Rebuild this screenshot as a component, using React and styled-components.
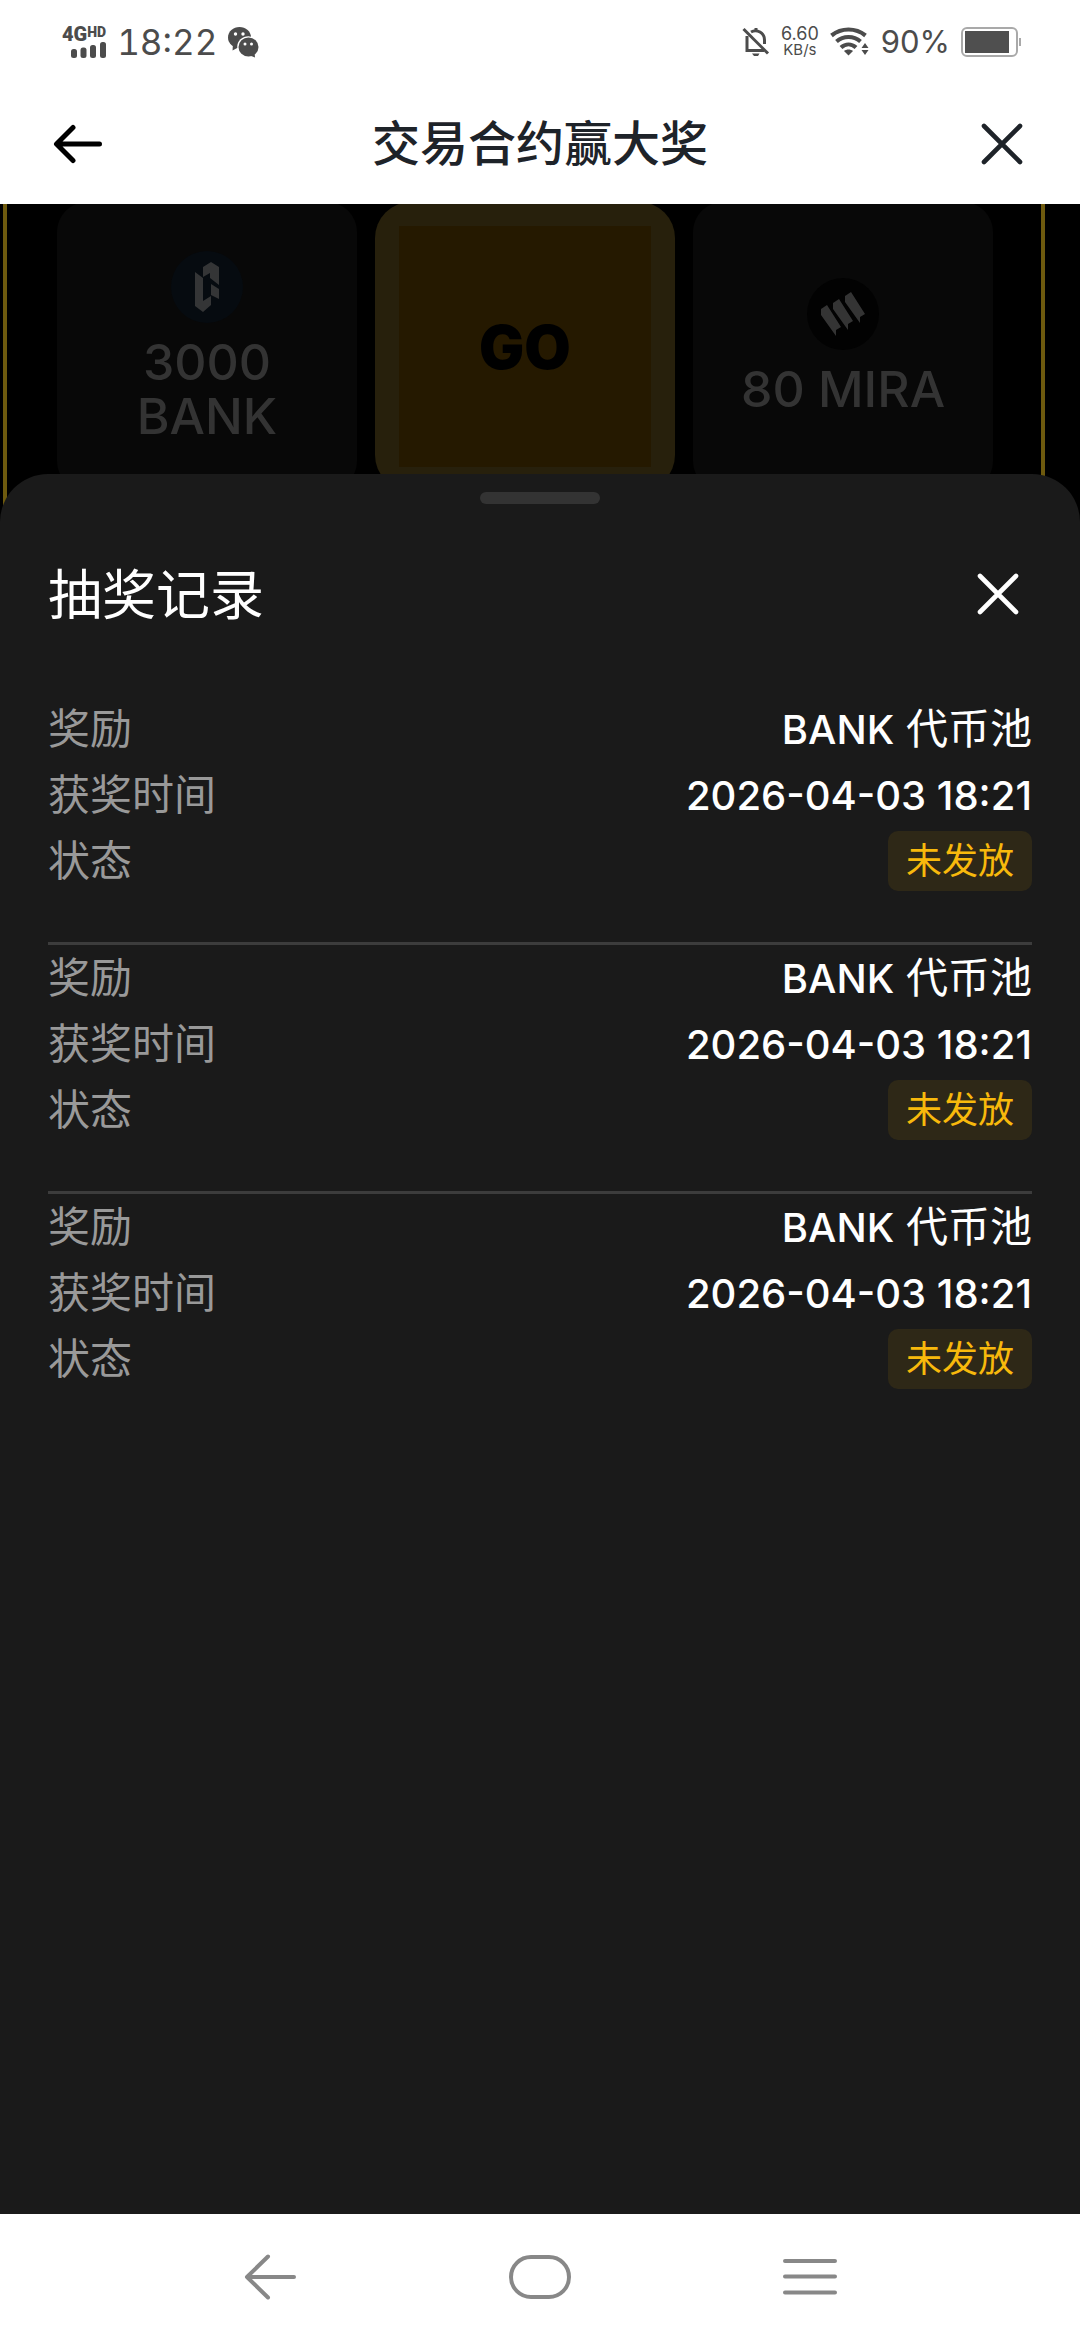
import styled, { createGlobalStyle } from "styled-components";

const records = [
  { id: 1, token: "BANK", pool: "代币池", time: "2026-04-03 18:21", status: "未发放" },
  { id: 2, token: "BANK", pool: "代币池", time: "2026-04-03 18:21", status: "未发放" },
  { id: 3, token: "BANK", pool: "代币池", time: "2026-04-03 18:21", status: "未发放" },
];

const CloseIcon = () => (
  <svg width="44" height="44" viewBox="0 0 44 44" fill="none" stroke="currentColor" strokeWidth="4.6" strokeLinecap="round">
    <path d="M4 4L40 40M40 4L4 40" />
  </svg>
);

const BankLogo = () => (
  <svg width="72" height="72" viewBox="0 0 72 72">
    <circle cx="36" cy="36" r="36" fill="#060b10" />
    <g fill="#343536">
      <path d="M24 21L32 27V50L40 45V54L32 61L24 55Z" />
      <path d="M32 16L40 11L48 16V34L39 27V22L32 26Z" />
      <path d="M40 33L48 38V48L40 44Z" />
    </g>
  </svg>
);

const MiraLogo = () => (
  <svg width="72" height="72" viewBox="0 0 72 72">
    <circle cx="36" cy="36" r="36" fill="#020202" />
    <g fill="#343434">
      <path d="M14 31L20 27L34 49L29 52V58L14 37Z" />
      <path d="M26 25L32 21L46 43L41 46V52L26 31Z" />
      <path d="M38 18L44 14L58 36L53 39V45L38 24Z" />
    </g>
  </svg>
);

const App = () => {
  return (
    <>
      <GlobalStyle />
      <Page>
        <StatusBar>
          <StatusGroup>
            <Network>
              <NetworkType>
                4G<small>HD</small>
              </NetworkType>
              <svg width="35" height="16" viewBox="0 0 35 16" fill="#4c4c4c">
                <rect x="0" y="7" width="6" height="9" rx="2.5" />
                <rect x="9.5" y="5.5" width="6" height="10.5" rx="2.5" />
                <rect x="19" y="3" width="6" height="13" rx="2.5" />
                <rect x="29" y="0" width="6" height="16" rx="2.5" />
              </svg>
            </Network>
            <Clock>18:22</Clock>
            <svg width="31" height="31" viewBox="0 0 31 31">
              <g fill="#4c4c4c">
                <ellipse cx="11.5" cy="10.5" rx="11.5" ry="10.5" />
                <path d="M5 17L4.5 23.5L11 20Z" />
              </g>
              <ellipse cx="20.5" cy="20" rx="11.3" ry="10.8" fill="#fff" />
              <g fill="#4c4c4c">
                <ellipse cx="20.5" cy="20" rx="10" ry="9.5" />
                <path d="M22 28.5L27 30.5L26.5 25.5Z" />
              </g>
              <g fill="#fff">
                <circle cx="7.5" cy="7" r="1.7" />
                <circle cx="15" cy="7" r="1.7" />
                <circle cx="17" cy="17" r="1.5" />
                <circle cx="23.5" cy="17" r="1.5" />
              </g>
            </svg>
          </StatusGroup>
          <StatusGroup>
            <svg width="28" height="30" viewBox="0 0 28 30" fill="none" stroke="#4c4c4c" strokeWidth="3">
              <path d="M5 9V23.5H22" />
              <path d="M9 5C15 1.5 22.5 6 22.5 13V17" />
              <path d="M1.5 2L26 26.5" />
              <path d="M14 1V4" />
              <path d="M10 26.5H17.5L16 29H12Z" fill="#4c4c4c" stroke="none" />
            </svg>
            <Speed>
              <span>6.60</span>
              <small>KB/s</small>
            </Speed>
            <svg width="40" height="30" viewBox="0 0 40 30" fill="none" stroke="#4c4c4c" strokeWidth="4.2">
              <path d="M1.5 8.5C11.5 0.5 25.5 0.5 35.5 8.5" />
              <path d="M6.5 14.5C13.5 8.5 23.5 8.5 30.5 14.5" />
              <path d="M11 20.5C15.5 16.5 21.5 16.5 26 20.5" />
              <path d="M14 24C16.5 22 20.5 22 23 24L18.5 28.5Z" fill="#4c4c4c" stroke="none" />
              <path d="M35 16L38.5 21H31.5ZM35 28L31.5 23H38.5Z" fill="#4c4c4c" stroke="none" />
            </svg>
            <Battery>90%</Battery>
            <svg width="61" height="30" viewBox="0 0 61 30">
              <rect x="1" y="1" width="55" height="28" rx="5" fill="#fff" stroke="#a9a9a9" strokeWidth="2" />
              <rect x="4" y="4" width="44" height="22" fill="#4f4f4f" />
              <rect x="58" y="11" width="2" height="8" fill="#a9a9a9" />
            </svg>
          </StatusGroup>
        </StatusBar>

        <Header>
          <IconButton aria-label="返回" $color="#000">
            <svg width="50" height="42" viewBox="0 0 50 42" fill="none" stroke="currentColor" strokeWidth="5" strokeLinecap="round" strokeLinejoin="round">
              <path d="M46.5 21H4M20 4.5L3.5 21L20 37.5" />
            </svg>
          </IconButton>
          <HeaderTitle>交易合约赢大奖</HeaderTitle>
          <IconButton aria-label="关闭" $color="#1e2329">
            <CloseIcon />
          </IconButton>
        </Header>

        <Board>
          <BoardFrame>
            <PrizeCard>
              <BankLogo />
              <PrizeName>
                <span>3000</span>
                <span>BANK</span>
              </PrizeName>
            </PrizeCard>
            <GoButton>
              <span>GO</span>
            </GoButton>
            <PrizeCard>
              <MiraLogo />
              <PrizeName>
                <span>80 MIRA</span>
              </PrizeName>
            </PrizeCard>
          </BoardFrame>
        </Board>

        <Sheet>
          <Handle />
          <SheetHeader>
            <SheetTitle>抽奖记录</SheetTitle>
            <SheetClose aria-label="关闭抽奖记录">
              <CloseIcon />
            </SheetClose>
          </SheetHeader>
          <List>
            {records.map((item) => (
              <Record key={item.id}>
                <Row>
                  <dt>奖励</dt>
                  <dd>
                    <Latin>{item.token}</Latin> {item.pool}
                  </dd>
                </Row>
                <Row>
                  <dt>获奖时间</dt>
                  <dd>
                    <Latin>{item.time}</Latin>
                  </dd>
                </Row>
                <Row>
                  <dt>状态</dt>
                  <Tag>{item.status}</Tag>
                </Row>
              </Record>
            ))}
          </List>
        </Sheet>

        <NavBar>
          <NavButton aria-label="后退">
            <svg width="54" height="48" viewBox="0 0 54 48">
              <path d="M51 24H4M25 3.5L4 24L25 44.5" />
            </svg>
          </NavButton>
          <NavButton aria-label="主页">
            <svg width="62" height="44" viewBox="0 0 62 44">
              <rect x="2" y="2" width="58" height="40" rx="20" />
            </svg>
          </NavButton>
          <NavButton aria-label="菜单">
            <svg width="54" height="36" viewBox="0 0 54 36">
              <path d="M2 2H52M2 17.5H52M2 33.5H52" />
            </svg>
          </NavButton>
        </NavBar>
      </Page>
    </>
  );
};

const GlobalStyle = createGlobalStyle`
  * {
    box-sizing: border-box;
    margin: 0;
    padding: 0;
  }
  body {
    background-color: #fff;
    font-family: Inter, "Noto Sans CJK SC", sans-serif;
  }
  button {
    border: none;
    background: none;
    font-family: inherit;
    cursor: pointer;
  }
  svg {
    display: block;
    flex-shrink: 0;
  }
`;

const Page = styled.div`
  display: flex;
  flex-direction: column;
  min-height: 100vh;
`;

const StatusBar = styled.div`
  display: flex;
  justify-content: space-between;
  align-items: center;
  height: 84px;
  padding: 0 58px 0 62px;
  color: #4c4c4c;
`;

const StatusGroup = styled.div`
  display: flex;
  align-items: center;
  gap: 11px;
`;

const Network = styled.div`
  display: flex;
  flex-direction: column;
  align-items: flex-end;
`;

const NetworkType = styled.div`
  display: flex;
  font-family: Roboto, sans-serif;
  font-size: 20px;
  font-weight: 900;
  line-height: 16px;
  small {
    font-size: 14px;
    line-height: 12px;
  }
`;

const Clock = styled.time`
  font-size: 35px;
  font-variant-numeric: tabular-nums;
  line-height: 40px;
`;

const Speed = styled.div`
  display: flex;
  flex-direction: column;
  align-items: center;
  font-size: 18px;
  line-height: 16px;
  small {
    font-size: 15px;
  }
`;

const Battery = styled.span`
  font-size: 31px;
  line-height: 40px;
`;

const Header = styled.header`
  display: flex;
  justify-content: space-between;
  align-items: center;
  height: 120px;
  padding: 0 48px;
`;

const IconButton = styled.button`
  display: flex;
  justify-content: center;
  align-items: center;
  width: 60px;
  height: 60px;
  color: ${(props) => props.$color};
`;

const HeaderTitle = styled.h1`
  color: #1e2329;
  font-size: 48px;
  font-weight: 500;
  line-height: 72px;
`;

const Board = styled.section`
  height: 318px;
  padding: 0 35px 0 3px;
  background-color: #000;
  overflow: hidden;
`;

const BoardFrame = styled.div`
  display: grid;
  grid-template-columns: repeat(3, 1fr);
  gap: 18px;
  height: 100%;
  padding: 0 48px 0 50px;
  border-left: 4px solid #6e5a0e;
  border-right: 4px solid #6e5a0e;
`;

const PrizeCard = styled.div`
  display: flex;
  flex-direction: column;
  justify-content: center;
  align-items: center;
  gap: 12px;
  height: 289px;
  margin-top: -2px;
  border-radius: 30px;
  background-color: #080808;
`;

const PrizeName = styled.p`
  display: flex;
  flex-direction: column;
  align-items: center;
  color: #333;
  font-size: 50px;
  font-weight: 500;
  line-height: 54px;
`;

const GoButton = styled.button`
  height: 289px;
  margin-top: -2px;
  padding: 24px;
  border-radius: 36px;
  background-color: #27200c;
  span {
    display: flex;
    justify-content: center;
    align-items: center;
    height: 100%;
    background-color: #251900;
    color: #000;
    font-size: 60px;
    font-weight: 900;
  }
`;

const Sheet = styled.main`
  position: relative;
  flex: 1;
  margin-top: -48px;
  padding: 18px 48px 48px;
  border-radius: 48px 48px 0 0;
  background-color: #1a1a1a;
  color: #fff;
`;

const Handle = styled.div`
  width: 120px;
  height: 12px;
  margin: 0 auto;
  border-radius: 6px;
  background-color: #333;
`;

const SheetHeader = styled.div`
  display: flex;
  justify-content: space-between;
  align-items: center;
  padding: 52px 0 60px;
`;

const SheetTitle = styled.h2`
  font-size: 54px;
  font-weight: 400;
  line-height: 80px;
`;

const SheetClose = styled.button`
  display: flex;
  justify-content: center;
  align-items: center;
  width: 68px;
  height: 68px;
  margin-bottom: 4px;
  color: #fff;
`;

const List = styled.div`
  display: flex;
  flex-direction: column;
`;

const Record = styled.dl`
  padding-bottom: 48px;
  border-bottom: 3px solid #3c3c3c;
  &:last-child {
    border-bottom: none;
  }
`;

const Row = styled.div`
  display: flex;
  justify-content: space-between;
  align-items: center;
  height: 66px;
  font-size: 42px;
  line-height: 60px;
  dt {
    color: #999;
  }
`;

const Latin = styled.span`
  font-size: 40px;
  font-weight: 500;
`;

const Tag = styled.dd`
  padding: 0 18px;
  border-radius: 10px;
  background-color: #2e2817;
  color: #f8b90c;
  font-size: 36px;
`;

const NavBar = styled.nav`
  display: flex;
  height: 126px;
  padding: 0 12.5%;
  background-color: #fff;
`;

const NavButton = styled.button`
  display: flex;
  flex: 1;
  justify-content: center;
  align-items: center;
  svg {
    fill: none;
    stroke: #888;
    stroke-width: 4;
    stroke-linecap: round;
    stroke-linejoin: round;
  }
`;

export default App;
